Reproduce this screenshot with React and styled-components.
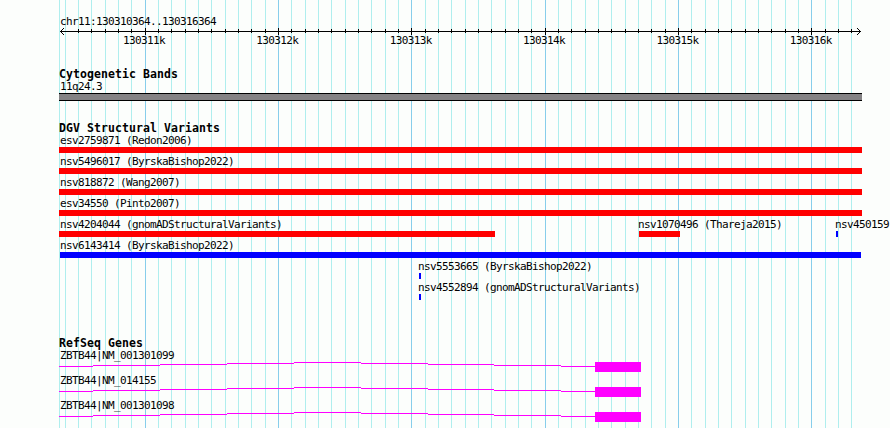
import React from "react";
import styled, { createGlobalStyle } from "styled-components";

const GlobalStyle = createGlobalStyle`
  body { margin: 0; background: #fcfefc; }
`;

const Browser = styled.main`
  position: relative;
  box-sizing: border-box;
  width: 890px;
  height: 428px;
  padding: 15px 0 0 59px;
  overflow: hidden;
  background: #fcfefc;
  color: #000;
  font-family: "DejaVu Sans Mono", "Liberation Mono", monospace;
`;

const GridLines = styled.svg`
  position: absolute;
  inset: 0;
  shape-rendering: crispEdges;
`;

const Content = styled.div`
  position: relative;
  display: flex;
  flex-direction: column;
  width: 831px;
`;

const Label = styled.div`
  height: 13px;
  padding-left: 1px;
  font-size: 11px;
  line-height: 13px;
  letter-spacing: -0.622px;
  white-space: pre;
`;

const Heading = styled.h2`
  height: 12px;
  margin: 0;
  font-size: 11.5px;
  line-height: 13px;
  letter-spacing: 0.077px;
  font-weight: 700;
  white-space: pre;
`;

const Drawing = styled.svg`
  display: block;
  shape-rendering: crispEdges;
`;

const Ruler = styled(Drawing)`
  margin-top: -1px;
`;

const ScaleLabels = styled.div`
  display: flex;
  gap: 90.33px;
  margin-top: -2px;
  padding-left: 63px;
`;

const Section = styled.section`
  margin-top: ${(p) => p.$gap}px;
`;

const Band = styled.div`
  box-sizing: border-box;
  width: 803px;
  height: 8px;
  border: solid #000;
  border-width: 1px 0;
  background: #848284;
`;

const Track = styled.div`
  display: flex;
  height: 21px;
`;

const Feature = styled.div`
  flex: none;
  width: ${(p) => p.$slot}px;
`;

const Bar = styled.div`
  width: ${(p) => p.$width}px;
  height: 6px;
  margin-left: ${(p) => p.$inset || 0}px;
  background: ${(p) => p.$color};
`;

const Spacer = styled.div`
  flex: none;
  width: ${(p) => p.$width}px;
`;

const Gene = styled.div`
  height: 25px;
`;

const RED = "#ff0000";
const BLUE = "#0000ff";

const tickX = Array.from({ length: 60 }, (_, k) => ({
  x: Math.floor(65 + (40 * k) / 3 + 0.001),
  major: k % 10 === 6,
}));

const tracks = [
  [{ name: "esv2759871 (Redon2006)", slot: 803, width: 803, color: RED }],
  [{ name: "nsv5496017 (ByrskaBishop2022)", slot: 803, width: 803, color: RED }],
  [{ name: "nsv818872 (Wang2007)", slot: 803, width: 803, color: RED }],
  [{ name: "esv34550 (Pinto2007)", slot: 803, width: 803, color: RED }],
  [
    { name: "nsv4204044 (gnomADStructuralVariants)", slot: 436, width: 436, color: RED },
    { name: "nsv1070496 (Thareja2015)", before: 142, slot: 197, width: 41, inset: 2, color: RED },
    { name: "nsv450159", slot: 57, width: 2, inset: 2, color: BLUE },
  ],
  [{ name: "nsv6143414 (ByrskaBishop2022)", slot: 803, width: 801, inset: 1, color: BLUE }],
  [{ name: "nsv5553665 (ByrskaBishop2022)", before: 358, slot: 240, width: 2, inset: 2, color: BLUE }],
  [{ name: "nsv4552894 (gnomADStructuralVariants)", before: 358, slot: 240, width: 2, inset: 2, color: BLUE }],
];

const intron = [
  [0, 34, 4],
  [34, 101, 3],
  [101, 168, 2],
  [168, 235, 1],
  [235, 302, 0],
  [302, 369, 1],
  [369, 435, 2],
  [435, 502, 3],
  [502, 536, 4],
];

function Scale() {
  return (
    <Ruler width="803" height="9">
      <rect x="1" y="4" width="801" height="1" />
      {[0, 1, 2, 3].map((i) => (
        <React.Fragment key={i}>
          <rect x={1 + i} y={4 - i} width="1" height="1" />
          <rect x={1 + i} y={4 + i} width="1" height="1" />
          <rect x={801 - i} y={4 - i} width="1" height="1" />
          <rect x={801 - i} y={4 + i} width="1" height="1" />
        </React.Fragment>
      ))}
      {tickX.filter(({ x }) => x > 65).map(({ x, major }) => (
        <rect key={x} x={x - 59} y={major ? 1 : 2} width="1" height={major ? 7 : 4} />
      ))}
    </Ruler>
  );
}

function GeneModel() {
  return (
    <Drawing width="803" height="12" fill="#ff00ff">
      {intron.map(([from, to, y]) => (
        <rect key={from} x={from} y={y} width={to - from} height="1" />
      ))}
      <rect x="536" y="0" width="46" height="10" />
    </Drawing>
  );
}

export default function App() {
  return (
    <>
      <GlobalStyle />
      <Browser>
        <GridLines width="890" height="428">
          <rect x="59" width="1" height="428" fill="#afeeee" />
          {tickX.map(({ x, major }) => (
            <rect key={x} x={x} width="1" height="428" fill={major ? "#87ceeb" : "#afeeee"} />
          ))}
        </GridLines>
        <Content>
          <Label>chr11:130310364..130316364</Label>
          <Scale />
          <ScaleLabels>
            {[11, 12, 13, 14, 15, 16].map((n) => (
              <Label key={n}>{`1303${n}k`}</Label>
            ))}
          </ScaleLabels>
          <Section $gap={21}>
            <Heading>Cytogenetic Bands</Heading>
            <Label>11q24.3</Label>
            <Band />
          </Section>
          <Section $gap={21}>
            <Heading>DGV Structural Variants</Heading>
            {tracks.map((features) => (
              <Track key={features[0].name}>
                {features.map((f) => (
                  <React.Fragment key={f.name}>
                    {f.before && <Spacer $width={f.before} />}
                    <Feature $slot={f.slot}>
                      <Label>{f.name}</Label>
                      <Bar $width={f.width} $inset={f.inset} $color={f.color} />
                    </Feature>
                  </React.Fragment>
                ))}
              </Track>
            ))}
          </Section>
          <Section $gap={35}>
            <Heading>RefSeq Genes</Heading>
            {["ZBTB44|NM_001301099", "ZBTB44|NM_014155", "ZBTB44|NM_001301098"].map((name) => (
              <Gene key={name}>
                <Label>{name}</Label>
                <GeneModel />
              </Gene>
            ))}
          </Section>
        </Content>
      </Browser>
    </>
  );
}
